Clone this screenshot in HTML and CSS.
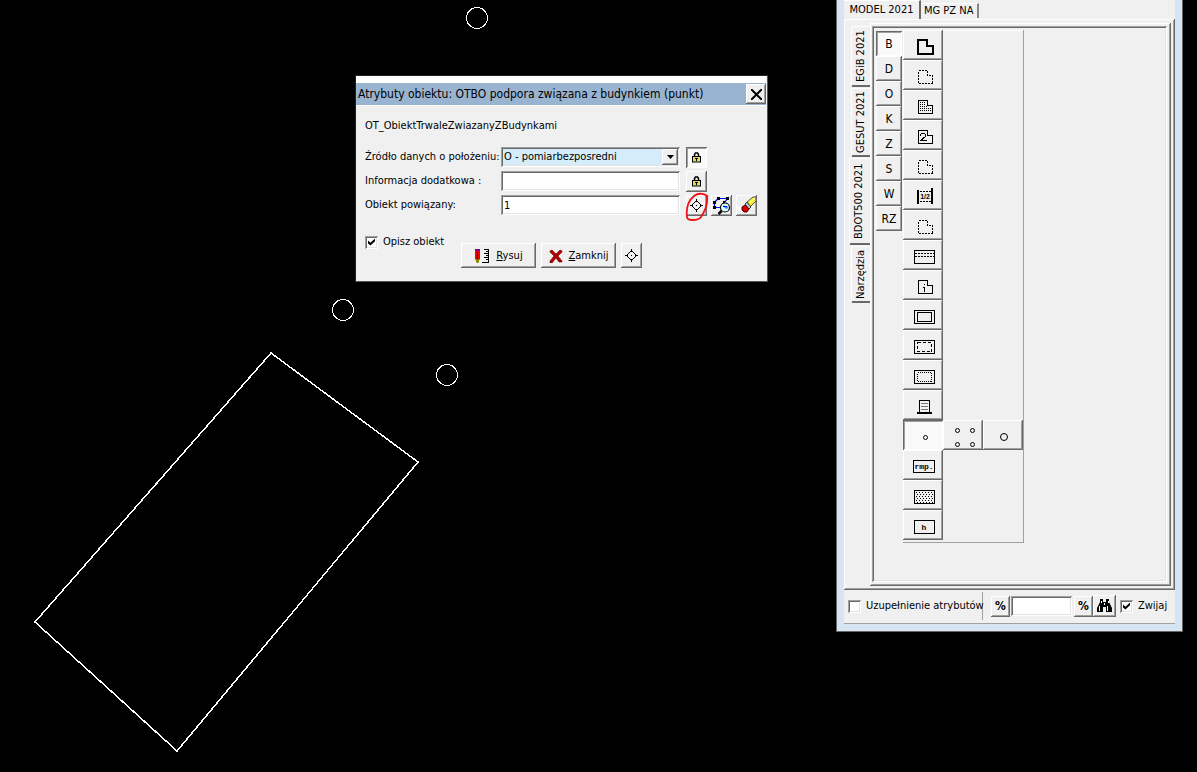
FILE: index.html
```html
<!DOCTYPE html>
<html lang="pl">
<head>
<meta charset="utf-8">
<title>Atrybuty obiektu</title>
<link rel="stylesheet" href="styles.css">
</head>
<body>
<svg class="map" aria-hidden="true">
  <g fill="none" stroke="#fff" shape-rendering="crispEdges">
    <polygon points="271,353 418,462 177,751 35,622" stroke-width="1.500"/>
    <circle cx="477" cy="18" r="10.5"/>
    <circle cx="343" cy="310" r="10.5"/>
    <circle cx="447" cy="375" r="10.5"/>
  </g>
</svg>

<svg class="defs" aria-hidden="true">
  <symbol id="target" viewBox="0 0 15 15"><path d="M7.5 2.5l5 5-5 5-5-5zM7.5 1v3M7.5 11v3M1 7.500h3M11 7.500h3" fill="none" stroke="#000"/><path d="M7 7h1v1H7z"/></symbol>
  <symbol id="lock" viewBox="0 0 9 11"><path d="M2.500 5V2.500L3.500 1h2l1 1.500V5" fill="none" stroke="#000" stroke-width="1.5"/><rect x=".5" y="4.500" width="8" height="5.500" fill="#e0dc70" stroke="#000"/><path d="M3 6h3v1H5v2H4V7H3z"/></symbol>
  <symbol id="house" viewBox="0 0 40 30"><path d="M15.500 10.500h9v5h5v8h-14z" fill="none"/></symbol>
</svg>

<form class="dialog">
  <header class="titlebar">
    <h1>Atrybuty obiektu: OTBO podpora związana z budynkiem (punkt)</h1>
    <button type="button" class="btn close" aria-label="Zamknij okno"><svg width="11" height="11" viewBox="0 0 11 11"><path d="M0 0l11 11M11 0l-11 11" stroke="#000" stroke-width="2"/></svg></button>
  </header>
  <div class="dialog-body">
    <p class="class-name">OT_ObiektTrwaleZwiazanyZBudynkami</p>
    <div class="fields">
      <label for="source">Źródło danych o położeniu:</label>
      <div class="combo">
        <select id="source" class="field"><option>O - pomiarbezposredni</option></select>
        <span class="arrow btn"><svg width="7" height="4" viewBox="0 0 7 4"><path d="M0 0h7L3.500 4z"/></svg></span>
      </div>
      <div class="tools"><button type="button" class="btn tool pressed" aria-label="Zablokuj źródło" aria-pressed="true"><svg width="9" height="11"><use href="#lock"/></svg></button></div>

      <label for="info">Informacja dodatkowa :</label>
      <input id="info" class="field" type="text">
      <div class="tools"><button type="button" class="btn tool" aria-label="Zablokuj informację"><svg width="9" height="11"><use href="#lock"/></svg></button></div>

      <label for="linked">Obiekt powiązany:</label>
      <input id="linked" class="field" type="text" value="1">
      <div class="tools">
        <button type="button" class="btn tool" aria-label="Wskaż obiekt"><svg width="15" height="15"><use href="#target"/></svg></button>
        <button type="button" class="btn tool" aria-label="Znajdź obiekt"><svg width="19" height="19" viewBox="0 0 19 19"><path d="M6.500 2.500h9l-3 4M6 2.500l-3.500 4v5h7" fill="none" stroke="#00f" stroke-width="1.200"/><path d="M5 1h3v3H5zM14 1h3v3h-3zM1 5h3v3H1zM1 10h3v3H1zM11 5h2v2h-2z"/><circle cx="13" cy="11.500" r="4.500" fill="#dff" stroke="#000" stroke-width="1.200"/><path d="M9.500 15l-3 3" stroke="#000" stroke-width="2.500"/><path d="M11.500 9.500l3 3" stroke="#0cd" stroke-width="1.500"/><path d="M11 10.500h4v2" fill="none" stroke="#00f"/></svg></button>
        <button type="button" class="btn tool" aria-label="Wyczyść"><svg width="19" height="19" viewBox="0 0 19 19"><path d="M0 11l4 5h4l-3-6z" fill="#fff"/><path d="M10 6l6-5h3v4l-6 6z" fill="#f5ee28" stroke="#333" stroke-width=".8"/><path d="M12 7l6-5" stroke="#fff"/><path d="M8 8l2-2 4 5-2 2z" fill="#bbc3d8" stroke="#111" stroke-width=".8"/><path d="M5 11l3-2 4 4-2 3H7l-2-2z" fill="#d00" stroke="#500"/></svg></button>
        <svg class="marker" width="26" height="32" viewBox="0 0 26 32" aria-hidden="true"><path d="M23 5C21 2 14 0 9 4 3 9 1 17 2 25c0 4 11 4 14 0 4-6 7-13 6-20" fill="none" stroke="#f01018" stroke-width="1.800"/></svg>
      </div>
    </div>
    <div class="actions">
      <label class="check"><input type="checkbox" checked><span>Opisz obiekt</span></label>
      <div class="buttons">
        <button type="button" class="btn action"><svg width="16" height="16" viewBox="0 0 16 16"><path d="M1 1h5v2H1z" fill="#808"/><path d="M1 3h5v8l-2 3H3l-2-3z" fill="#e00"/><path d="M3 4h1v7H3z"/><path d="M2 11h3v3l-1 1H3l-1-1z" fill="#880"/><path d="M14.500 1v14M8 14.500h7M10 1.500h5M12 3.500h3M10 5.500h5M12 7.500h3M10 9.500h5M12 11.500h3" fill="none" stroke="#000"/></svg><span><u>R</u>ysuj</span></button>
        <button type="button" class="btn action"><svg width="14" height="14" viewBox="0 0 14 14"><path d="M1 2l2-1 4 4 4-4 2 1v1L9 7l4 5v1h-3L7 9l-4 5H1v-2l4-5-4-4z" fill="#b00000" stroke="#600" stroke-width=".6"/></svg><span><u>Z</u>amknij</span></button>
        <button type="button" class="btn pick" aria-label="Wskaż punkt"><svg width="15" height="15"><use href="#target"/></svg></button>
      </div>
    </div>
  </div>
</form>

<aside class="panel">
  <nav class="top-tabs">
    <button type="button" class="top-tab active">MODEL 2021</button>
    <button type="button" class="top-tab">MG PZ NA</button>
  </nav>
  <div class="sheet">
    <nav class="side-tabs">
      <button type="button" class="side-tab egib">EGiB 2021</button>
      <button type="button" class="side-tab gesut">GESUT 2021</button>
      <button type="button" class="side-tab bdot active">BDOT500 2021</button>
      <button type="button" class="side-tab narz">Narzędzia</button>
    </nav>
    <div class="page"><div class="well">
      <div class="letters">
        <button type="button" class="btn letter pressed">B</button>
        <button type="button" class="btn letter">D</button>
        <button type="button" class="btn letter">O</button>
        <button type="button" class="btn letter">K</button>
        <button type="button" class="btn letter">Z</button>
        <button type="button" class="btn letter">S</button>
        <button type="button" class="btn letter">W</button>
        <button type="button" class="btn letter">RZ</button>
      </div>
      <div class="symbols">
        <button type="button" class="btn symbol" aria-label="Budynek"><svg viewBox="0 0 40 30"><path d="M15 10h9v6h6v8H15z" stroke-width="2"/></svg></button>
        <button type="button" class="btn symbol" aria-label="Budynek projektowany"><svg viewBox="0 0 40 30"><use href="#house" stroke-dasharray="2 1"/></svg></button>
        <button type="button" class="btn symbol" aria-label="Blok budynku"><svg viewBox="0 0 40 30"><use href="#house"/><path d="M17.500 12v10M19.500 12v10M21.500 12v10M23.500 16v6M25.500 18v4M27.500 18v4" stroke-dasharray="1 1"/></svg></button>
        <button type="button" class="btn symbol" aria-label="Kondygnacje"><svg viewBox="0 0 40 30"><use href="#house"/><path d="M17.500 15.500v-1l1-1h3l1 1v2l-5 4h6"/></svg></button>
        <button type="button" class="btn symbol" aria-label="Nawis"><svg viewBox="0 0 40 30"><use href="#house" stroke-dasharray="2 1"/></svg></button>
        <button type="button" class="btn symbol" aria-label="Łącznik"><svg viewBox="0 0 40 30"><path d="M14.500 10v14M29 8v16" stroke-width="2"/><path d="M17 11.500h11M17 21.500h11" stroke-dasharray="2 1"/><text x="22" y="19" class="fraction">1/2</text></svg></button>
        <button type="button" class="btn symbol" aria-label="Przejazd"><svg viewBox="0 0 40 30"><use href="#house" stroke-dasharray="2 1"/></svg></button>
        <button type="button" class="btn symbol" aria-label="Wiata"><svg viewBox="0 0 40 30"><path d="M11.500 10.500h20v13h-20z"/><path d="M12 13.500h19M12 16.500h19" stroke-dasharray="2 1"/></svg></button>
        <button type="button" class="btn symbol" aria-label="Inny budynek"><svg viewBox="0 0 40 30"><use href="#house"/><path d="M21.500 14v1M20 17.500h1.500V22"/></svg></button>
        <button type="button" class="btn symbol" aria-label="Taras"><svg viewBox="0 0 40 30"><path d="M11.500 10.500h20v13h-20zM14.500 12.500h14v9h-14z"/></svg></button>
        <button type="button" class="btn symbol" aria-label="Weranda"><svg viewBox="0 0 40 30"><path d="M11.500 10.500h20v13h-20z"/><path d="M14.500 12.500h14v9h-14z" stroke-dasharray="3 2"/></svg></button>
        <button type="button" class="btn symbol" aria-label="Rampa"><svg viewBox="0 0 40 30"><path d="M11.500 10.500h20v13h-20z"/><path d="M14.500 12.500h14v9h-14z" stroke-dasharray="1 1"/></svg></button>
        <button type="button" class="btn symbol" aria-label="Schody"><svg viewBox="0 0 40 30"><path d="M16.500 23V10.500h10V23"/><path d="M18 13.500h7M18 16.500h7M18 19.500h7" stroke="#777"/><path d="M14 23h15" stroke-width="2"/></svg></button>
        <div class="symbol-row">
          <button type="button" class="btn symbol pressed" aria-label="Podpora"><svg class="round" viewBox="0 0 40 30"><circle cx="22.500" cy="17.500" r="2"/></svg></button>
          <button type="button" class="btn symbol" aria-label="Cztery podpory"><svg class="round" viewBox="0 0 40 30"><circle cx="14.500" cy="10.500" r="2"/><circle cx="29.500" cy="10.500" r="2"/><circle cx="14.500" cy="24.500" r="2"/><circle cx="29.500" cy="24.500" r="2"/></svg></button>
          <button type="button" class="btn symbol" aria-label="Podpora okrągła"><svg class="round" viewBox="0 0 40 30"><circle cx="21" cy="17" r="3.500"/></svg></button>
        </div>
        <button type="button" class="btn symbol"><svg viewBox="0 0 40 30"><path d="M10.500 10.500h21v12h-21z"/><text x="21" y="19" class="mono">rmp.</text></svg></button>
        <button type="button" class="btn symbol" aria-label="Szrafura"><svg viewBox="0 0 40 30"><path d="M11.500 10.500h20v13h-20z"/><path d="M13 12.500h18M13 16.500h18M13 20.500h18" stroke-dasharray="1 2"/><path d="M14 14.500h17M14 18.500h17M14 22.500h17" stroke-dasharray="1 2"/></svg></button>
        <button type="button" class="btn symbol"><svg viewBox="0 0 40 30"><path d="M11.500 10.500h20v13h-20z"/><text x="21" y="20" class="mono">h</text></svg></button>
      </div>
    </div></div>
  </div>
  <footer class="status">
    <label class="check fill"><input type="checkbox"><span>Uzupełnienie atrybutów</span></label>
    <div class="search">
      <button type="button" class="btn percent">%</button>
      <input type="text" class="field query" aria-label="Szukaj">
      <button type="button" class="btn percent">%</button>
      <button type="button" class="btn find" aria-label="Znajdź"><svg width="15" height="14" viewBox="0 0 15 14"><path d="M3 0h3v3h3V0h3v3l3 6v4H9V8H6v5H0V9l3-6z"/><path d="M2.500 7v5M10.500 7v5M4.500 2v2M11.500 2v2M7.500 4v2" stroke="#fff"/></svg></button>
      <label class="check"><input type="checkbox" checked><span>Zwijaj</span></label>
    </div>
  </footer>
</aside>
</body>
</html>
```
FILE: styles.css
```css
* { box-sizing: border-box; }
body {
  margin: 0;
  min-height: 100vh;
  position: relative;
  overflow: hidden;
  background: #000;
  color: #000;
  font: 11px/14px Tahoma, "DejaVu Sans Condensed", "Noto Sans", sans-serif;
}
button, input, select { font: inherit; color: inherit; margin: 0; }
svg { display: block; flex: none; }
.map { position: absolute; width: 100%; height: 100%; }
.defs { position: absolute; width: 0; height: 0; }

.btn {
  display: flex;
  align-items: center;
  justify-content: center;
  padding: 0;
  border: 0;
  background: #f0f0f0;
  box-shadow: inset -1px -1px #696969, inset 1px 1px #fff, inset -2px -2px #a0a0a0;
}
.btn.pressed {
  background: #f9f9f9;
  box-shadow: inset 1px 1px #696969, inset -1px -1px #fff, inset 2px 2px #a0a0a0;
}
.field {
  width: 100%;
  height: 20px;
  padding: 0 3px;
  border: 0;
  border-radius: 0;
  outline: 0;
  background: #fff;
  box-shadow: inset 1px 1px #a0a0a0, inset -1px -1px #fff, inset 2px 2px #696969, inset -2px -2px #e3e3e3;
}
.check { display: flex; align-items: center; gap: 5px; }
.check input {
  appearance: none;
  flex: none;
  position: relative;
  width: 13px;
  height: 13px;
  background: #fff;
  box-shadow: inset 1px 1px #a0a0a0, inset -1px -1px #fff, inset 2px 2px #696969, inset -2px -2px #e3e3e3;
}
.check input:checked::after {
  content: "";
  position: absolute;
  inset: 3px;
  background: #000;
  clip-path: polygon(0 30%, 35% 60%, 100% 0, 100% 40%, 35% 100%, 0 70%);
}

/* Attribute dialog */
.dialog {
  position: absolute;
  left: 355px;
  top: 75px;
  width: 413px;
  padding: 1px;
  border: 1px solid #555;
  border-top-color: #222;
  border-left-color: #222;
  background: #f0f0f0;
}
.titlebar {
  display: flex;
  align-items: center;
  height: 29px;
  margin: -1px 0 0 -1px;
  border-top: 7px solid #fff;
  background: #99b4d1;
}
.titlebar h1 { flex: 1; margin: 0 0 0 2px; font-size: 12px; font-weight: 400; white-space: nowrap; }
.close { width: 20px; height: 20px; }
.dialog-body { padding: 13px 8px 12px; border-top: 1px solid #fff; }
.class-name { margin: 0 0 12px; }
.fields {
  display: grid;
  grid-template-columns: 136px 179px 1fr;
  grid-auto-rows: 24px;
  align-items: center;
}
.combo { position: relative; }
.combo select { appearance: none; background: #d5edfb; }
.arrow { position: absolute; right: 2px; top: 2px; width: 16px; height: 16px; pointer-events: none; }
.tools { position: relative; display: flex; gap: 4px; padding-left: 6px; }
.tool { width: 21px; height: 21px; }
.marker { position: absolute; left: 5px; top: -3px; }
.actions { display: flex; align-items: flex-start; padding-top: 18px; }
.actions > .check { width: 96px; white-space: nowrap; }
.buttons { display: flex; gap: 5px; padding-top: 8px; }
.action { width: 75px; height: 25px; gap: 6px; }
.pick { width: 21px; height: 25px; }

/* Object palette */
.panel {
  position: absolute;
  left: 836px;
  top: 0;
  width: 347px;
  padding: 0 7px 7px;
  border: 1px solid #666;
  border-top: 0;
  background: #d7e4f2;
}
.top-tabs { display: flex; align-items: flex-start; height: 19px; background: #f0f0f0; }
.top-tab {
  height: 15px;
  margin-top: 3px;
  padding: 0 4px 0 3px;
  border: 0;
  border-top: 1px solid #fff;
  border-right: 2px solid #888;
  background: #f0f0f0;
  white-space: nowrap;
}
.top-tab.active { width: 77px; height: 19px; margin-top: 0; padding: 0; border-right-color: #696969; }
.sheet {
  display: flex;
  padding: 4px 4px 4px 5px;
  background: #f0f0f0;
  box-shadow: inset -1px -1px #696969, inset 1px 1px #fff, inset -2px -2px #a0a0a0;
}
.side-tabs { display: flex; flex-direction: column; align-items: flex-end; gap: 1px; width: 21px; padding-top: 3px; }
.side-tab {
  width: 19px;
  padding: 0;
  border: 0;
  border-top: 2px solid #696969;
  border-right: 1px solid #fff;
  border-bottom: 1px solid #fff;
  border-radius: 0 2px 2px 0;
  background: #f0f0f0;
  writing-mode: vertical-rl;
  transform: rotate(180deg);
  text-align: center;
  white-space: nowrap;
}
.side-tab.active { width: 21px; padding-left: 3px; }
.egib { height: 61px; }
.gesut { height: 69px; }
.bdot { height: 87px; }
.narz { height: 57px; }
.page {
  flex: 1;
  padding: 3px 4px 4px 2px;
  box-shadow: inset -1px -1px #696969, inset 1px 1px #fff, inset -2px -2px #a0a0a0;
}
.well {
  display: flex;
  align-items: flex-start;
  padding: 4px 2px 39px 4px;
  box-shadow: inset 1px 1px #a0a0a0, inset -1px -1px #fff, inset 2px 2px #696969, inset -2px -2px #e3e3e3;
}
.letters { display: grid; grid-auto-rows: 25px; width: 26px; padding-top: 1px; }
.letter { font-size: 12px; }
.symbols {
  display: grid;
  grid-template-columns: 40px 80px;
  grid-auto-rows: 30px;
  margin-left: 1px;
  padding: 0 0 2px;
  border-right: 1px solid #a0a0a0;
  border-bottom: 1px solid #a0a0a0;
  box-shadow: inset 0 1px #fff;
}
.symbol { grid-column: 1; width: 40px; height: 30px; }
.symbol svg { width: 40px; height: 30px; fill: none; stroke: #000; shape-rendering: crispEdges; }
.symbol svg.round { shape-rendering: auto; }
.symbol-row { grid-column: 1 / -1; display: flex; }
.mono, .fraction { font: bold 8px "Liberation Mono", monospace; fill: #000; stroke: none; text-anchor: middle; }
.fraction { font: bold 7px "Liberation Sans", sans-serif; }
.status {
  display: flex;
  align-items: stretch;
  height: 34px;
  padding: 2px 0 3px 4px;
  border-bottom: 1px solid #a0a0a0;
  background: #f0f0f0;
}
.fill { width: 135px; border-right: 1px solid #a0a0a0; white-space: nowrap; }
.search { display: flex; align-items: center; padding-left: 8px; }
.percent { width: 19px; height: 21px; font-size: 12px; font-weight: 700; }
.query { width: 61px; margin: 0 2px 0 1px; }
.find { width: 23px; height: 22px; margin-right: 4px; }
```
